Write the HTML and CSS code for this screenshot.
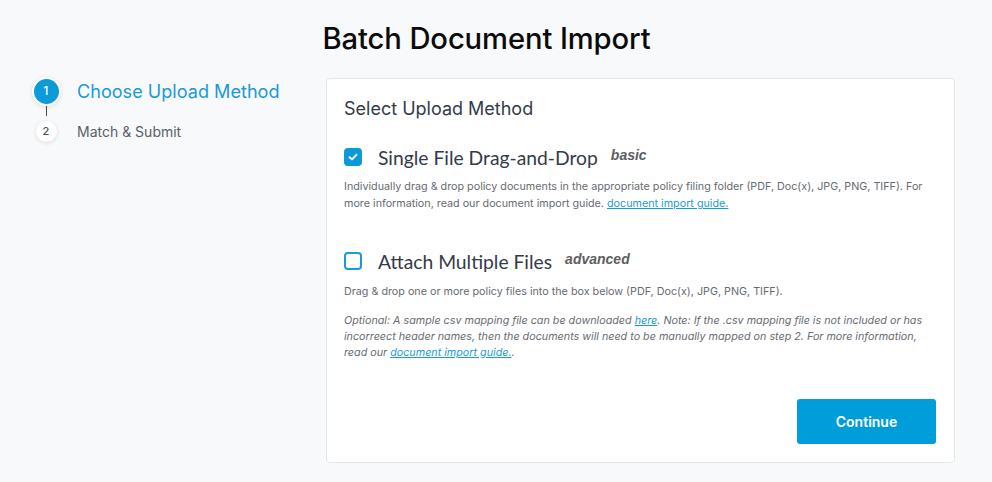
FILE: index.html
```html
<!DOCTYPE html>
<html>
<head>
<meta charset="utf-8">
<link rel="stylesheet" href="styles.css">
</head>
<body>
<div class="page">
  <h1 class="title">Batch Document Import</h1>
  <div class="main">
    <aside class="steps">
      <div class="step active">
        <div class="bullet"><span class="dot">1</span></div>
        <div class="label">Choose Upload Method</div>
      </div>
      <div class="connector"></div>
      <div class="step">
        <div class="bullet"><span class="dot">2</span></div>
        <div class="label">Match &amp; Submit</div>
      </div>
    </aside>
    <section class="card">
      <h2 class="card-title">Select Upload Method</h2>
      <div class="option">
        <div class="option-head">
          <span class="box checked">
            <svg width="12" height="12" viewBox="0 0 12 12"><path d="M2.6 6.2 L5 8.4 L9.4 3.8" fill="none" stroke="#fff" stroke-width="1.9" stroke-linecap="round" stroke-linejoin="round"/></svg>
          </span>
          <span class="opt-name">Single File Drag-and-Drop</span>
          <span class="tag">basic</span>
        </div>
        <p class="desc">Individually drag &amp; drop policy documents in the appropriate policy filing folder (PDF, Doc(x), JPG, PNG, TIFF). For more information, read our document import guide. <a href="#">document import guide.</a></p>
      </div>
      <div class="option second">
        <div class="option-head">
          <span class="box"></span>
          <span class="opt-name">Attach Multiple Files</span>
          <span class="tag">advanced</span>
        </div>
        <p class="desc">Drag &amp; drop one or more policy files into the box below (PDF, Doc(x), JPG, PNG, TIFF).</p>
        <p class="desc note">Optional: A sample csv mapping file can be downloaded <a href="#">here</a>. Note: If the .csv mapping file is not included or has incorreect header names, then the documents will need to be manually mapped on step 2. For more information, read our <a href="#">document import guide.</a>.</p>
      </div>
      <div class="actions">
        <button class="btn">Continue</button>
      </div>
    </section>
  </div>
</div>
</body>
</html>
```
FILE: styles.css
```css
html, body {
  margin: 0;
  padding: 0;
  background: #f8f9fb;
  font-family: Inter, "Liberation Sans", sans-serif;
}
.page {
  width: 992px;
  height: 482px;
  overflow: hidden;
}
.title {
  margin: 0;
  padding-top: 22px;
  padding-right: 19px;
  height: 56px;
  box-sizing: border-box;
  font-size: 29.2px;
  font-weight: 500;
  color: #0b0b0b;
  text-align: center;
  line-height: 34px;
  letter-spacing: -0.1px;
}
.main {
  display: flex;
  padding-left: 31px;
  padding-top: 20px;
}
.steps {
  width: 295px;
  display: flex;
  flex-direction: column;
}
.step {
  display: flex;
  align-items: center;
  height: 30px;
}
.bullet {
  width: 30px;
  height: 30px;
  display: flex;
  align-items: center;
  justify-content: center;
  flex: none;
}
.dot {
  width: 21px;
  height: 21px;
  box-sizing: border-box;
  border-radius: 50%;
  background: #fff;
  box-shadow: 0 1px 4px rgba(0,0,0,0.12);
  display: flex;
  align-items: center;
  justify-content: center;
  font-size: 11px;
  font-weight: 500;
  color: #4a505a;
}
.step.active .dot {
  width: 29px;
  height: 29px;
  border: 2.5px solid #fff;
  background: #0a9bd8;
  color: #fff;
  font-size: 11.5px;
}
.label {
  margin-left: 16px;
  font-size: 14px;
  color: #5a5f66;
}
.step.active .label {
  font-size: 18.1px;
  color: #1b9ad6;
}
.connector {
  width: 1.5px;
  height: 10px;
  background: #3f4a5a;
  margin-left: 14.5px;
}
.card {
  width: 629px;
  height: 385px;
  margin-top: 2px;
  box-sizing: border-box;
  background: #fff;
  border: 1px solid #e3e6ea;
  border-radius: 4px;
  padding: 18px 18px 18px 17px;
  display: flex;
  flex-direction: column;
}
.card-title {
  margin: 0;
  font-size: 18px;
  font-weight: 400;
  color: #333b48;
  line-height: 24px;
}
.option {
  margin-top: 23px;
}
.option.second {
  margin-top: 36px;
}
.option-head {
  display: flex;
  align-items: center;
  height: 26px;
}
.box {
  width: 18px;
  height: 18px;
  box-sizing: border-box;
  border: 2px solid #1a9bd7;
  border-radius: 4px;
  display: flex;
  align-items: center;
  justify-content: center;
  flex: none;
}
.box.checked {
  background: #0a9ad9;
  border-color: #0a9ad9;
}
.opt-name {
  margin-left: 16px;
  font-family: Lato, "Open Sans", sans-serif;
  font-size: 19.3px;
  color: #333b48;
}
.tag {
  margin-left: 13px;
  font-family: "Liberation Sans", Arial, sans-serif;
  font-size: 14px;
  font-weight: 700;
  font-style: italic;
  color: #5e5e5e;
  position: relative;
  top: -2px;
}
.desc {
  margin: 8px 0 0 0;
  font-size: 10.75px;
  line-height: 17px;
  color: #666b72;
}
.second .desc {
  margin-top: 9px;
}
.desc a {
  color: #1a9bd7;
}
.second .note {
  margin-top: 13px;
  font-style: italic;
  line-height: 16px;
}
.actions {
  margin-top: auto;
  display: flex;
  justify-content: flex-end;
}
.btn {
  width: 139px;
  height: 45px;
  border: none;
  border-radius: 3px;
  background: #009ddb;
  color: #fff;
  font-family: Inter, "Liberation Sans", sans-serif;
  font-size: 14px;
  font-weight: 600;
}
```
